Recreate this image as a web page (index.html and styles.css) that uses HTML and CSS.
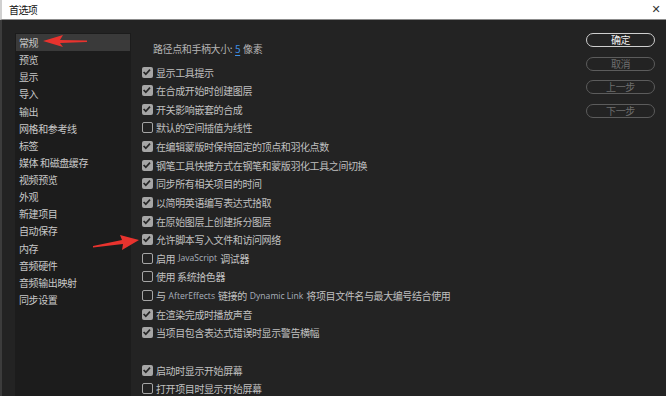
FILE: index.html
```html
<!DOCTYPE html>
<html lang="zh-CN">
<head>
<meta charset="utf-8">
<link rel="stylesheet" href="styles.css">
</head>
<body>
<div class="titlebar">
  <span class="title">首选项</span>
  <span class="close">✕</span>
</div>
<div class="window">
  <ul class="sidebar">
    <li class="item selected">常规</li>
    <li class="item">预览</li>
    <li class="item">显示</li>
    <li class="item">导入</li>
    <li class="item">输出</li>
    <li class="item">网格和参考线</li>
    <li class="item">标签</li>
    <li class="item">媒体 和磁盘缓存</li>
    <li class="item">视频预览</li>
    <li class="item">外观</li>
    <li class="item">新建项目</li>
    <li class="item">自动保存</li>
    <li class="item">内存</li>
    <li class="item">音频硬件</li>
    <li class="item">音频输出映射</li>
    <li class="item">同步设置</li>
  </ul>
  <div class="main">
    <div class="header">路径点和手柄大小: <span class="num">5</span> 像素</div>
    <div class="rows">
      <div class="row"><span class="cb on"></span>显示工具提示</div>
      <div class="row"><span class="cb on"></span>在合成开始时创建图层</div>
      <div class="row"><span class="cb on"></span>开关影响嵌套的合成</div>
      <div class="row"><span class="cb"></span>默认的空间插值为线性</div>
      <div class="row"><span class="cb on"></span>在编辑蒙版时保持固定的顶点和羽化点数</div>
      <div class="row"><span class="cb on"></span>钢笔工具快捷方式在钢笔和蒙版羽化工具之间切换</div>
      <div class="row"><span class="cb on"></span>同步所有相关项目的时间</div>
      <div class="row"><span class="cb on"></span>以简明英语编写表达式拾取</div>
      <div class="row"><span class="cb on"></span>在原始图层上创建拆分图层</div>
      <div class="row"><span class="cb on"></span>允许脚本写入文件和访问网络</div>
      <div class="row"><span class="cb"></span>启用 <span class="latin">JavaScript</span> 调试器</div>
      <div class="row"><span class="cb"></span>使用 系统拾色器</div>
      <div class="row"><span class="cb"></span>与 <span class="latin">AfterEffects</span> 链接的 <span class="latin">Dynamic Link</span> 将项目文件名与最大编号结合使用</div>
      <div class="row"><span class="cb on"></span>在渲染完成时播放声音</div>
      <div class="row"><span class="cb on"></span>当项目包含表达式错误时显示警告横幅</div>
      <div class="row"></div>
      <div class="row"><span class="cb on"></span>启动时显示开始屏幕</div>
      <div class="row"><span class="cb"></span>打开项目时显示开始屏幕</div>
    </div>
  </div>
  <div class="buttons">
    <div class="btn primary">确定</div>
    <div class="btn">取消</div>
    <div class="btn">上一步</div>
    <div class="btn">下一步</div>
  </div>
  <svg class="arrow arrow-left" width="50" height="16" viewBox="0 0 50 16">
    <polygon points="0,7 20,1 17,6 44,6.5 44,8 17,9 20,13" fill="#e8332e"/>
  </svg>
  <svg class="arrow arrow-right" width="50" height="18" viewBox="0 0 50 18">
    <polygon points="46,5 27,0 29,5 0,11 0,12.5 30,9 29,15" fill="#e8332e"/>
  </svg>
</div>
</body>
</html>
```
FILE: styles.css
```css
* { box-sizing: border-box; }
html, body { margin: 0; padding: 0; }
body {
  width: 666px;
  height: 396px;
  overflow: hidden;
  background: #232323;
  font-family: "Noto Sans CJK SC", "Noto Sans", sans-serif;
  font-size: 10px;
  letter-spacing: -0.4px;
  color: #c0c0c0;
}
.titlebar {
  height: 20px;
  background: #ffffff;
  border-bottom: 1px solid #8c8c8c;
  border-left: 2px solid #d0d0d0;
  display: flex;
  align-items: center;
  justify-content: space-between;
  padding: 0 6px 0 7px;
  color: #111;
  font-size: 10px;
  letter-spacing: -0.6px;
}
.title { line-height: 19px; }
.close { font-size: 11px; color: #333; font-family: "DejaVu Sans", sans-serif; }
.window {
  position: relative;
  display: flex;
  height: 376px;
  border-left: 2px solid #3c3c3c;
}
.sidebar {
  list-style: none;
  margin: 13px 0 0 13px;
  padding: 1px 1px 0;
  width: 116px;
  background: #1c1c1c;
  flex-shrink: 0;
}
.item {
  height: 17.13px;
  line-height: 17px;
  padding-left: 3px;
  white-space: nowrap;
  color: #c8c8c8;
}
.item.selected { background: #3a3a3a; }
.main {
  margin-left: 11px;
  padding-top: 19.7px;
  flex: 1;
}
.header {
  height: 18.64px;
  line-height: 18.64px;
  padding-left: 11px;
  margin-bottom: 4.4px;
  color: #b4b4b4;
}
.num {
  color: #3d8fe6;
  text-decoration: underline;
  text-underline-offset: 2px;
  margin: 0 1px;
}
.row {
  height: 18.64px;
  display: flex;
  align-items: center;
  white-space: nowrap;
}
.cb {
  width: 11px;
  height: 11px;
  border: 1.5px solid #a6a6a6;
  border-radius: 2px;
  margin-right: 3px;
  flex-shrink: 0;
}
.cb.on {
  background: #a6a6a6 url("data:image/svg+xml,%3Csvg xmlns='http://www.w3.org/2000/svg' viewBox='0 0 11 11'%3E%3Cpath d='M1.6 5 L3.8 7.2 L8 2.6' fill='none' stroke='%23262626' stroke-width='1.7'/%3E%3C/svg%3E") no-repeat center / 100% 100%;
  border: none;
}
.latin {
  font-family: "Open Sans", "Noto Sans", sans-serif;
  font-size: 8.6px;
  letter-spacing: 0;
  color: #a8b0bc;
  margin: 0 3px;
}
.buttons {
  width: 69px;
  margin: 13px 11px 0 0;
  display: flex;
  flex-direction: column;
  gap: 9.5px;
  flex-shrink: 0;
}
.btn {
  height: 14px;
  border: 1px solid #5c5c5c;
  border-radius: 8px;
  text-align: center;
  line-height: 12px;
  font-size: 10px;
  color: #6e6e6e;
}
.btn.primary {
  border-color: #cfcfcf;
  color: #f0f0f0;
}
.arrow { position: absolute; }
.arrow-left { left: 41px; top: 14px; }
.arrow-right { left: 91px; top: 215px; }
```
